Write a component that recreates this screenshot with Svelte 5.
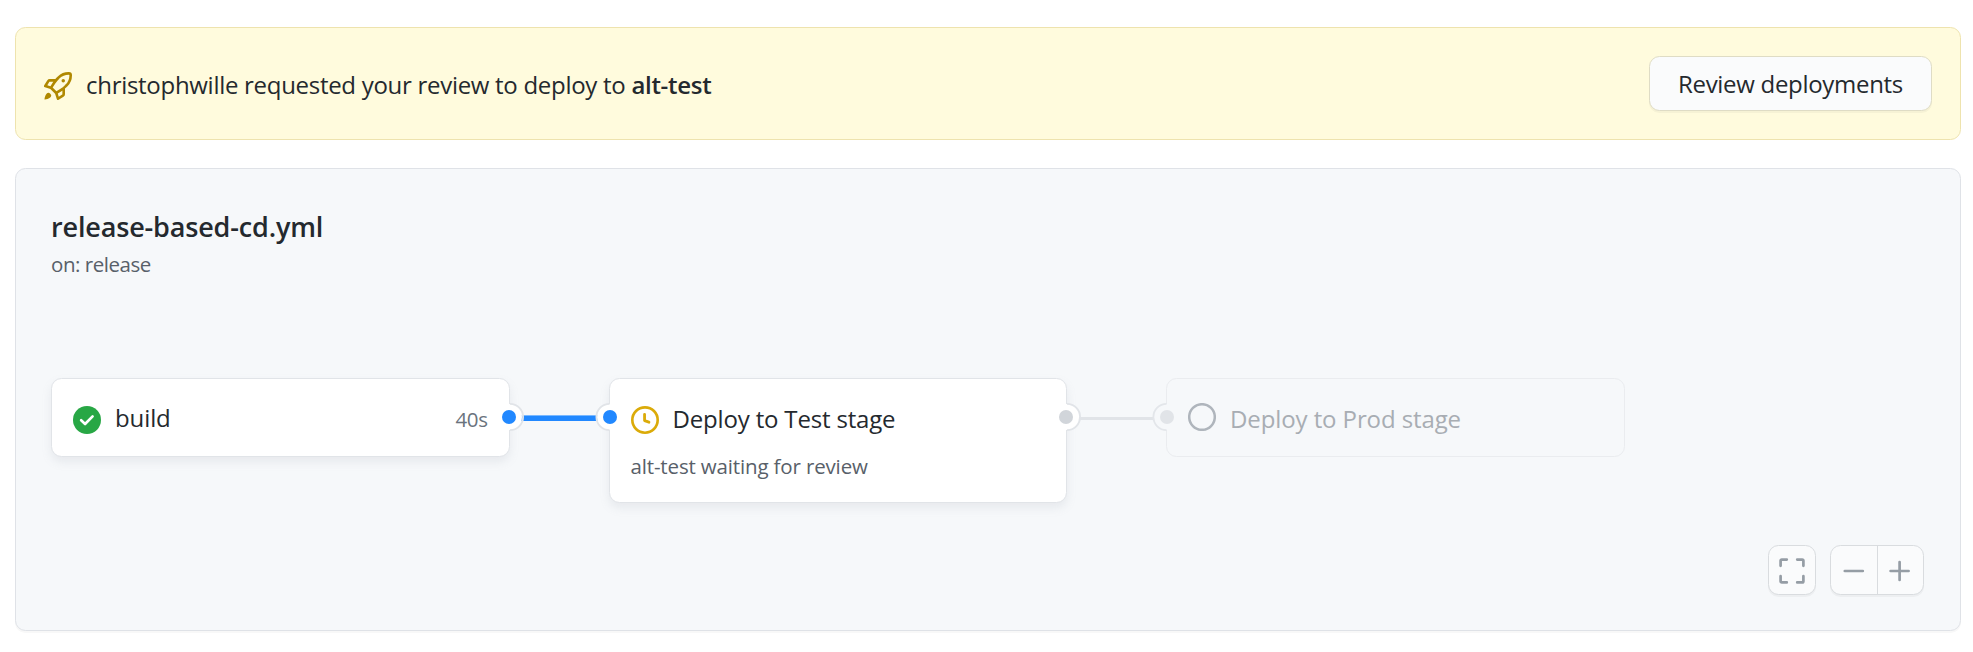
<script>
  const connectors = {
    done: { dot: '#2188ff', ring: '#e1e4e8', fill: '#ffffff' },
    pending: { dot: '#d1d5da', ring: '#e1e4e8', fill: '#ffffff' },
    idle: { dot: '#e1e4e8', ring: '#e3e6ea', fill: '#f6f8fa' }
  };
</script>

{#snippet port(side, kind)}
  <svg class="port {side}" width="30" height="30" viewBox="-15 -15 30 30" aria-hidden="true">
    <circle r="13" fill={connectors[kind].fill} />
    <path
      d={side === 'out' ? 'M1-13.1A13.1 13.1 0 0 1 1 13.1' : 'M-.5-13.1A13.1 13.1 0 0 0 -.5 13.1'}
      fill="none"
      stroke={connectors[kind].ring}
      stroke-width="1.8"
    />
    <circle r="7" fill={connectors[kind].dot} />
  </svg>
{/snippet}

<main>
  <section class="banner">
    <svg class="rocket" width="28" height="28" viewBox="0 0 16 16" fill="#b08800" fill-rule="evenodd" aria-hidden="true">
      <path d="M14.064 0a8.75 8.75 0 00-6.187 2.563l-.459.458c-.314.314-.616.641-.904.979H3.31a1.75 1.75 0 00-1.49.833L.11 7.607a.75.75 0 00.418 1.11l3.102.954c.037.051.079.1.124.145l2.429 2.428c.046.046.094.088.145.125l.954 3.102a.75.75 0 001.11.418l2.774-1.707a1.75 1.75 0 00.833-1.49V9.485c.338-.288.665-.59.979-.904l.458-.459A8.75 8.75 0 0016 1.936V1.75A1.75 1.75 0 0014.25 0h-.186zM10.5 10.625c-.088.06-.177.118-.266.175l-2.35 1.521.548 1.783 1.949-1.2a.25.25 0 00.119-.213v-2.066zM3.678 8.116L5.2 5.766c.058-.09.117-.178.176-.266H3.309a.25.25 0 00-.213.119l-1.2 1.95 1.782.547zm5.26-4.493A7.25 7.25 0 0114.063 1.5h.186a.25.25 0 01.25.25v.186a7.25 7.25 0 01-2.123 5.127l-.459.458a15.21 15.21 0 01-2.499 2.02l-2.317 1.5-2.143-2.143 1.5-2.317a15.25 15.25 0 012.02-2.5l.458-.458h.002zM12 5a1 1 0 11-2 0 1 1 0 012 0zm-8.44 9.56a1.5 1.5 0 10-2.12-2.12c-.734.73-1.047 2.332-1.15 3.003a.23.23 0 00.265.265c.671-.103 2.273-.416 3.005-1.148z" />
    </svg>
    <p class="message">christophwille requested your review to deploy to <strong>alt-test</strong></p>
    <button class="review">Review deployments</button>
  </section>

  <section class="panel">
    <h1>release-based-cd.yml</h1>
    <p class="trigger">on: release</p>

    <div class="graph">
      <article class="card">
        <div class="row">
          <svg class="icon" width="28" height="28" viewBox="0 0 16 16" aria-hidden="true">
            <circle cx="8" cy="8" r="8" fill="#28a745" />
            <path d="M4.65 8.15 6.9 10.3l4.3-4.4" fill="none" stroke="#fff" stroke-width="1.5" stroke-linecap="round" stroke-linejoin="round" />
          </svg>
          <span class="name build">build</span>
          <span class="time">40s</span>
        </div>
        {@render port('out', 'done')}
      </article>

      <div class="line active"></div>

      <article class="card">
        {@render port('in', 'done')}
        <div class="row">
          <svg class="icon" width="28" height="28" viewBox="0 0 16 16" fill="none" stroke="#dbab09" aria-hidden="true">
            <circle cx="8" cy="8" r="7.25" stroke-width="1.5" />
            <path d="M7.75 4.75v3.6l2.5.9" stroke-width="1.6" stroke-linecap="round" stroke-linejoin="round" />
          </svg>
          <span class="name test">Deploy to Test stage</span>
        </div>
        <p class="note">alt-test waiting for review</p>
        {@render port('out', 'pending')}
      </article>

      <div class="line"></div>

      <article class="card idle">
        {@render port('in', 'idle')}
        <div class="row">
          <svg class="icon raised" width="28" height="28" viewBox="0 0 28 28" fill="none" stroke="#afb5bc" aria-hidden="true">
            <circle cx="14" cy="14" r="12.8" stroke-width="2.5" />
          </svg>
          <span class="name prod">Deploy to Prod stage</span>
        </div>
      </article>
    </div>

    <div class="controls">
      <button class="control fit" aria-label="Fit to window">
        <svg width="26" height="26" viewBox="0 0 26 26" fill="none" stroke="#959da5" stroke-width="2.7" stroke-linecap="round" stroke-linejoin="round">
          <path d="M1.6 7.8V2.8q0-1.2 1.2-1.2h5M18.2 1.6h5q1.2 0 1.2 1.2v5M24.4 18.2v5q0 1.2-1.2 1.2h-5M7.8 24.4h-5q-1.2 0-1.2-1.2v-5" />
        </svg>
      </button>
      <div class="zoom">
        <button aria-label="Zoom out">
          <svg width="22" height="22" viewBox="0 0 22 22" stroke="#959da5" stroke-width="2.7" stroke-linecap="round"><path d="M1.8 11h18" /></svg>
        </button>
        <button aria-label="Zoom in">
          <svg width="22" height="22" viewBox="0 0 22 22" stroke="#959da5" stroke-width="2.7" stroke-linecap="round"><path d="M1.6 11h18M10.6 2v18" /></svg>
        </button>
      </div>
    </div>
  </section>
</main>

<style>
  :global(body) {
    margin: 0;
    background: #fff;
  }
  main {
    box-sizing: border-box;
    height: 652px;
    padding: 27px 12px 0 15px;
    font-family: 'Open Sans', 'Noto Sans', sans-serif;
    font-size: 24px;
    color: #24292e;
  }
  p, h1 {
    margin: 0;
    white-space: nowrap;
  }
  button {
    box-sizing: border-box;
    margin: 0;
    padding: 0;
    border: 0;
    background: none;
    font: inherit;
    color: inherit;
  }
  svg {
    display: block;
    flex: none;
  }
  .banner {
    box-sizing: border-box;
    display: flex;
    align-items: center;
    height: 113px;
    padding: 0 28px;
    border: 1px solid #eee3ae;
    border-radius: 10.5px;
    background: #fffbdd;
  }
  .rocket {
    margin: 5px 14px 0 0;
  }
  .message {
    flex: 1;
    padding-top: 2px;
    line-height: 36px;
    letter-spacing: -0.29px;
  }
  .message strong {
    font-weight: 600;
  }
  .review {
    width: 283px;
    height: 55px;
    padding-top: 1px;
    border: 1px solid #dfdcc5;
    border-radius: 10.5px;
    background: #fafbfc;
    box-shadow: 0 2px 0 rgba(27, 31, 35, 0.04);
    line-height: 36px;
    letter-spacing: -0.3px;
    white-space: nowrap;
  }
  .panel {
    box-sizing: border-box;
    display: flex;
    flex-direction: column;
    height: 463px;
    margin-top: 28px;
    padding: 39px 36px 35px 35px;
    border: 1px solid #dfe2e7;
    border-radius: 10.5px;
    background: #f6f8fa;
    box-shadow: 0 2px 0 rgba(27, 31, 35, 0.03);
  }
  h1 {
    font-size: 27px;
    line-height: 38px;
    font-weight: 600;
    letter-spacing: -0.16px;
  }
  .trigger {
    font-size: 20.5px;
    line-height: 32px;
    color: #586069;
    letter-spacing: -0.45px;
    padding-top: 2px;
  }
  .graph {
    display: flex;
    align-items: flex-start;
    margin-top: 98px;
    height: 125px;
  }
  .card {
    box-sizing: border-box;
    position: relative;
    flex: none;
    width: 458.5px;
    padding: 20px 21px 19px;
    border: 1px solid #e1e4e8;
    border-radius: 10.5px;
    background: #fff;
    box-shadow: 0 5px 10px rgba(149, 157, 165, 0.15);
  }
  .card.idle {
    border-color: #eaecef;
    background: #f6f8fa;
    box-shadow: none;
  }
  .row {
    display: flex;
    align-items: center;
    height: 38px;
  }
  .icon {
    margin: 4px 14px 0 0;
  }
  .icon.raised {
    margin-top: -2px;
  }
  .name {
    line-height: 36px;
    white-space: nowrap;
  }
  .build {
    letter-spacing: -0.1px;
  }
  .test {
    padding-top: 2px;
    letter-spacing: -0.17px;
  }
  .prod {
    padding-top: 2px;
    letter-spacing: -0.1px;
    color: #a8adb3;
  }
  .time {
    margin-left: auto;
    padding-top: 2px;
    font-size: 20.5px;
    color: #6a737d;
    letter-spacing: -0.4px;
  }
  .note {
    padding: 13px 0 1px;
    font-size: 20.5px;
    line-height: 32px;
    color: #586069;
    letter-spacing: -0.15px;
  }
  .line {
    flex: none;
    width: 99px;
    height: 3px;
    margin-top: 39px;
    background: #e1e4e8;
  }
  .line.active {
    height: 6px;
    margin-top: 37px;
    background: linear-gradient(#79b8ff 1px, #2188ff 1px);
  }
  .port {
    position: absolute;
    top: 23px;
  }
  .port.out {
    right: -15px;
  }
  .port.in {
    left: -15px;
  }
  .controls {
    display: flex;
    justify-content: flex-end;
    gap: 14px;
    margin-top: auto;
  }
  .control, .zoom {
    box-sizing: border-box;
    height: 50px;
    border: 1px solid #d9dcdf;
    border-radius: 10.5px;
    background: #fafbfc;
    box-shadow: 0 2px 0 rgba(27, 31, 35, 0.04);
  }
  .control {
    width: 48px;
  }
  .control svg, .zoom svg {
    margin: 2px auto 0;
  }
  .zoom {
    display: flex;
    width: 94px;
  }
  .zoom button {
    flex: 1;
  }
  .zoom button + button {
    border-left: 1px solid #d9dcdf;
  }
</style>
